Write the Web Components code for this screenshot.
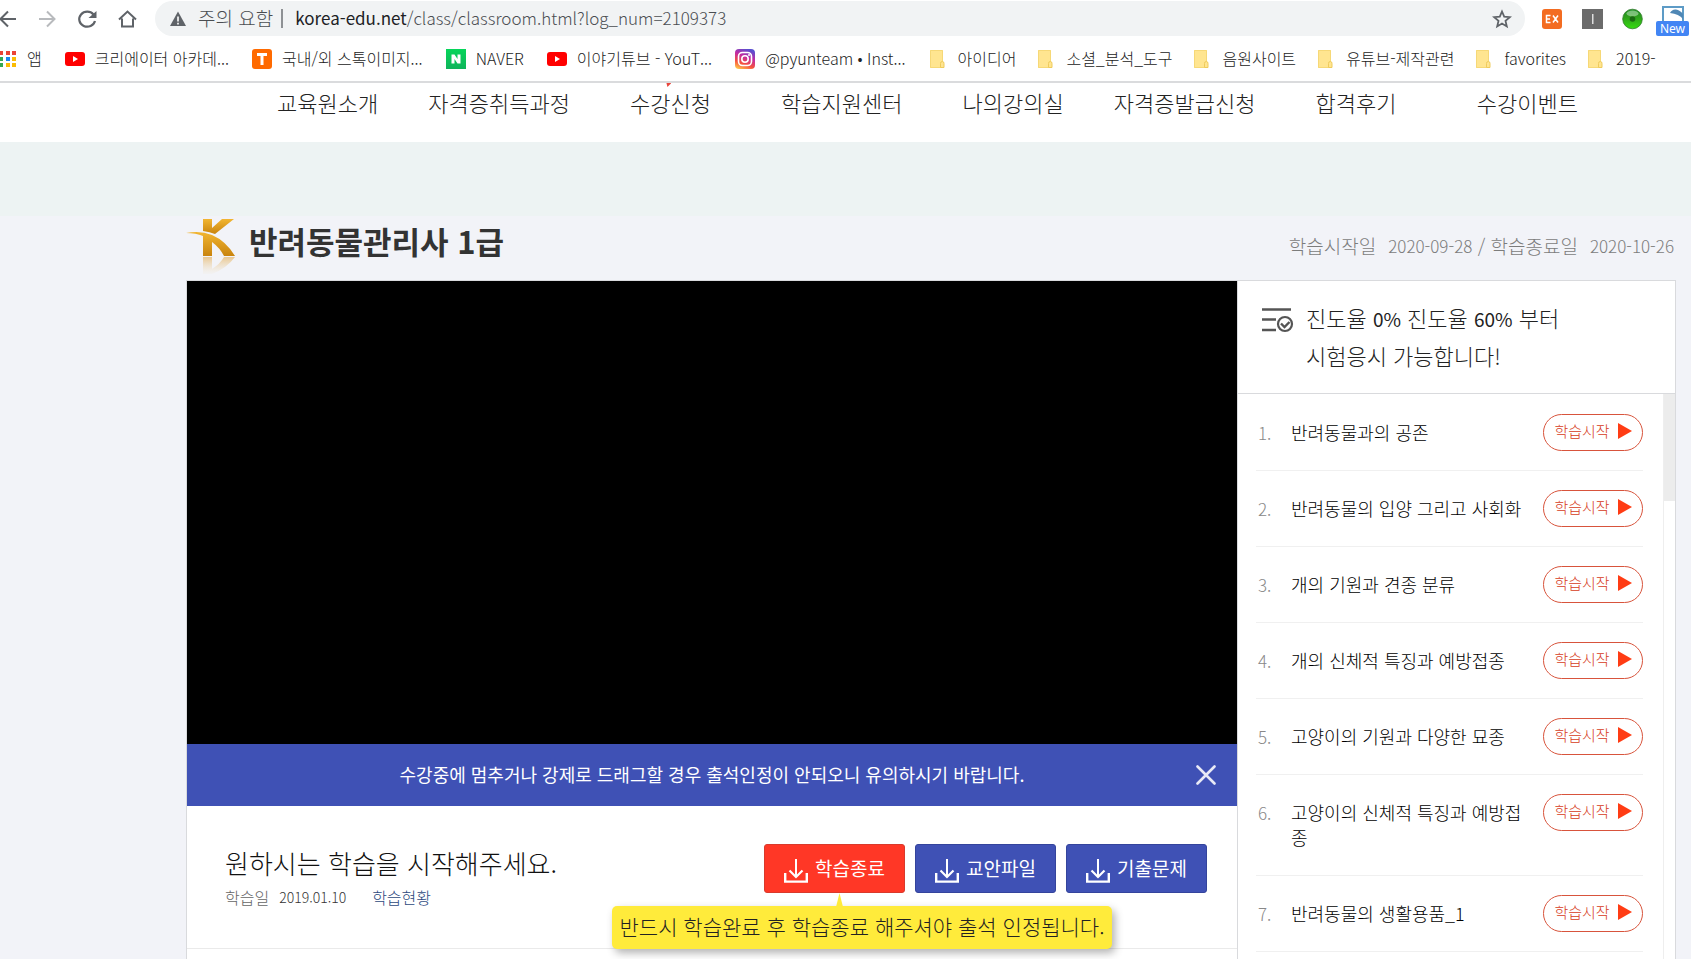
<!DOCTYPE html>
<html lang="ko">
<head>
<meta charset="utf-8">
<title>반려동물관리사 1급</title>
<style>
  html, body { height: 100%; }
  body { margin: 0; overflow: hidden; background: #f2f3f8; font-family: "Noto Sans CJK KR", sans-serif; color: #333; }
</style>
</head>
<body>
<class-app></class-app>
<script>
const define = (name, html, setup) => {
  const t = document.createElement('template');
  t.innerHTML = '<style>*{box-sizing:border-box}a{color:inherit;text-decoration:none}button{font:inherit;cursor:pointer}svg{display:block;flex:none}</style>' + html;
  customElements.define(name, class extends HTMLElement {
    constructor() {
      super();
      this.attachShadow({ mode: 'open' }).append(t.content.cloneNode(true));
    }
    connectedCallback() { if (setup) setup(this, this.shadowRoot); }
  });
};

const ICONS = {
  apps: '<svg width="17" height="18" viewBox="0 0 17 18"><path fill="#ea4335" d="M0 1h3v4H0zM6 1h4v4H6zM12 1h4v4h-4z"/><path fill="#34a853" d="M0 7h3v4H0zM0 13h3v4H0z"/><path fill="#1a86f0" d="M6 7h4v4H6z"/><path fill="#fbbc04" d="M12 7h4v4h-4zM6 13h4v4H6zM12 13h4v4h-4z"/></svg>',
  youtube: '<svg width="20" height="20" viewBox="0 0 20 20"><rect y="3" width="20" height="14" rx="3" fill="#f00"/><path d="M8 7l5 3-5 3z" fill="#fff"/></svg>',
  tstock: '<svg width="20" height="20" viewBox="0 0 20 20"><rect width="20" height="20" rx="3" fill="#ff6a00"/><path d="M5 4h10v3h-3.500v9h-3V7H5z" fill="#fff"/></svg>',
  naver: '<svg width="20" height="20" viewBox="0 0 20 20"><defs><linearGradient id="g" x2="0" y2="1"><stop stop-color="#06d65a"/><stop offset="1" stop-color="#0fb35a"/></linearGradient></defs><rect width="20" height="20" fill="url(#g)"/><path d="M5.500 5.500h3l3 4.500V5.500h3v9h-3l-3-4.500v4.500h-3z" fill="#fff"/></svg>',
  insta: '<svg width="20" height="20" viewBox="0 0 20 20"><defs><linearGradient id="g" x1=".2" y1="1" x2=".6" y2="0"><stop stop-color="#ffc34a"/><stop offset=".3" stop-color="#f5513f"/><stop offset=".65" stop-color="#c32aa3"/><stop offset="1" stop-color="#5a4fcf"/></linearGradient></defs><rect width="20" height="20" rx="4" fill="url(#g)"/><g fill="none" stroke="#fff" stroke-width="1.600"><rect x="3.500" y="3.500" width="13" height="13" rx="4"/><circle cx="10" cy="10" r="3.200"/></g><circle cx="14" cy="6" r="1" fill="#fff"/></svg>',
  folder: '<svg width="16" height="20" viewBox="0 0 16 20"><path d="M1 1h13v12.500h1V19H1z" fill="#ffe590"/><path d="M1.500 1.500h12v12M1.500 1.500v17h10" fill="none" stroke="#f6d877"/><path d="M11.500 18.500v-4q0-2 1.800-2T15 14.500v4z" fill="#ffe590" stroke="#efcb5c"/></svg>'
};

define('bookmark-item', `
<style>
  :host { display: block; flex: none; margin-right: 2px; }
  a { display: flex; align-items: center; gap: var(--gap, 10px); font: 300 16px/24px "Noto Sans CJK KR", sans-serif; color: #222; white-space: nowrap; }
  .text { padding-bottom: 2px; }
  :host([icon=folder]) { --gap: 13px; margin-right: 0; }
</style>
<a href="#"><span id="i"></span><span class="text"><slot></slot></span></a>`,
(el, r) => { r.getElementById('i').innerHTML = ICONS[el.getAttribute('icon')]; });

define('browser-bar', `
<style>
  :host { display: block; background: #fff; border-bottom: 2px solid #dadbdd; }
  .tools { display: flex; align-items: center; height: 37px; }
  .tools button { border: 0; background: none; padding: 0; width: 24px; height: 24px; display: grid; place-items: center; flex: none; }
  .nav { display: flex; gap: 16px; width: 155px; margin-left: -5px; flex: none; }
  .omni { flex: 1; display: flex; align-items: center; height: 35px; border-radius: 18px; background: #f1f3f4; padding: 0 11px 0 15px; margin-left: 5px; font: 300 17px/24px "Noto Sans CJK KR", sans-serif; color: #4a4d51; white-space: nowrap; }
  .omni span { padding-bottom: 2px; }
  .warn { font-size: 19px; margin: 0 8px 0 12px; }
  .sep { width: 2px; height: 19px; background: #8e9194; margin-right: 12px; }
  .url { flex: 1; min-width: 0; }
  .url b { font-weight: 400; color: #202124; }
  .ext { display: flex; align-items: center; gap: 16px; margin-left: 15px; }
  .clip { position: relative; width: 33px; height: 30px; margin: 0 2px 0 -4px; }
  .clip svg { margin: 2px 0 0 6px; }
  .badge { position: absolute; left: 0; right: 0; bottom: -2px; height: 15px; border-radius: 2px; background: #4285f4; color: #fff; font: 400 12px/15px "Noto Sans", sans-serif; text-align: center; }
  .marks { display: flex; align-items: center; gap: 21px; height: 44px; padding-bottom: 1px; overflow: hidden; }
</style>
<div class="tools">
  <div class="nav">
    <button aria-label="뒤로"><svg width="24" height="24" viewBox="0 0 24 24" fill="none" stroke="#5f6368" stroke-width="2"><path d="M21 12H6M13 4.500L5.500 12l7.500 7.500"/></svg></button>
    <button aria-label="앞으로"><svg width="24" height="24" viewBox="0 0 24 24" fill="none" stroke="#b8babd" stroke-width="2"><path d="M4 12h15M12 4.500l7.500 7.500-7.500 7.500"/></svg></button>
    <button aria-label="새로고침"><svg width="24" height="24" viewBox="0 0 24 24"><path d="M18.500 7.500A8 7.500 0 1 0 20 14" fill="none" stroke="#5f6368" stroke-width="2.200"/><path d="M21.500 4v7h-8z" fill="#5f6368"/></svg></button>
    <button aria-label="홈"><svg width="24" height="24" viewBox="0 0 24 24" fill="none" stroke="#5f6368" stroke-width="2"><path d="M7 11.500v8h11v-8M4 12.500L12.500 4.500l8.500 8"/></svg></button>
  </div>
  <div class="omni">
    <svg width="16" height="16" viewBox="0 0 16 16"><path d="M8 0.500L16 15H0z" fill="#5f6368"/><path d="M7.200 5.500h1.600v5H7.200zM7.200 11.800h1.600v1.600H7.200z" fill="#fff"/></svg>
    <span class="warn">주의 요함</span><i class="sep"></i>
    <span class="url"><b>korea-edu.net</b>/class/classroom.html?log_num=2109373</span>
    <button aria-label="북마크"><svg width="20" height="20" viewBox="0 0 20 20"><path d="M10 2.500l2.200 5.200 5.600.5-4.300 3.700 1.300 5.500L10 14.500l-4.800 2.900 1.300-5.500-4.300-3.700 5.600-.5z" fill="none" stroke="#5f6368" stroke-width="1.800"/></svg></button>
  </div>
  <div class="ext">
    <svg width="24" height="22" viewBox="0 0 24 22"><rect x="2" y="1" width="20" height="20" rx="3" fill="#f36c21"/><path d="M10.500 7.500H6.500v7h4M6.500 11h3.500M13 7.500l5 7M18 7.500l-5 7" fill="none" stroke="#fff" stroke-width="1.500"/></svg>
    <svg width="24" height="22" viewBox="0 0 24 22"><rect x="2" y="1" width="21" height="20" fill="#6b6b6b"/><path d="M12 6h1.500v10H12z" fill="#ddd"/></svg>
    <svg width="24" height="22" viewBox="0 0 24 22"><defs><linearGradient id="gg" x2="0" y2="1"><stop stop-color="#1c8f22"/><stop offset=".4" stop-color="#2fa01c"/><stop offset="1" stop-color="#35dc10"/></linearGradient></defs><circle cx="12.500" cy="11" r="9.800" fill="url(#gg)" stroke="#2e7a2a" stroke-width=".8"/><ellipse cx="12.500" cy="5.500" rx="6" ry="3" fill="#fff" opacity=".4"/><circle cx="12.500" cy="11" r="2.800" fill="#1a6a12"/></svg>
    <div class="clip"><svg width="22" height="16" viewBox="0 0 22 16"><rect x="1" y="1" width="20" height="15" fill="#fff" stroke="#5d9bc6" stroke-width="2"/><path d="M8 7q2-4 6-3.500T21 8v5q-4-5-13-6z" fill="#4f87b5"/></svg><span class="badge">New</span></div>
  </div>
</div>
<nav class="marks" aria-label="북마크바">
  <bookmark-item icon="apps">앱</bookmark-item>
  <bookmark-item icon="youtube">크리에이터 아카데...</bookmark-item>
  <bookmark-item icon="tstock">국내/외 스톡이미지...</bookmark-item>
  <bookmark-item icon="naver">NAVER</bookmark-item>
  <bookmark-item icon="youtube">이야기튜브 - YouT...</bookmark-item>
  <bookmark-item icon="insta">@pyunteam • Inst...</bookmark-item>
  <bookmark-item icon="folder">아이디어</bookmark-item>
  <bookmark-item icon="folder">소셜_분석_도구</bookmark-item>
  <bookmark-item icon="folder">음원사이트</bookmark-item>
  <bookmark-item icon="folder">유튜브-제작관련</bookmark-item>
  <bookmark-item icon="folder">favorites</bookmark-item>
  <bookmark-item icon="folder">2019-</bookmark-item>
</nav>`);

define('site-nav', `
<style>
  :host { display: block; background: #fff; }
  nav { display: grid; grid-template-columns: repeat(8, 1fr); padding: 7px 78px 28px 242px; font: 300 22px/24px "Noto Sans CJK KR", sans-serif; color: #222; text-align: center; white-space: nowrap; }
  .on { position: relative; }
  .on::before { content: ""; position: absolute; left: 50%; top: -7px; margin-left: -4px; width: 5px; height: 4px; background: #e8453c; clip-path: polygon(0 0, 100% 0, 20% 100%); }
</style>
<nav><a href="#">교육원소개</a><a href="#">자격증취득과정</a><a href="#" class="on">수강신청</a><a href="#">학습지원센터</a><a href="#">나의강의실</a><a href="#">자격증발급신청</a><a href="#">합격후기</a><a href="#">수강이벤트</a></nav>`);

define('course-header', `
<style>
  :host { display: flex; align-items: flex-start; height: 64px; }
  svg { margin-top: 1px; }
  h1 { margin: 5px 0 0 13px; font: 700 31px/40px "Noto Sans CJK KR", sans-serif; color: #333; }
  p { margin: 18px 2px 0 auto; display: flex; font: 300 19px/24px "Noto Sans CJK KR", sans-serif; color: #7c7c7c; white-space: pre; }
  time { font-size: 17px; }
  .gap { margin-left: 12px; }
</style>
<svg width="50" height="58" viewBox="0 0 50 58">
  <defs><linearGradient id="k" x2="0" y2="1"><stop stop-color="#f2b632"/><stop offset="1" stop-color="#c9840e"/></linearGradient>
  <linearGradient id="f" x2="0" y2="1"><stop stop-color="#e3a94a" stop-opacity=".6"/><stop offset="1" stop-color="#f2e3c4" stop-opacity=".1"/></linearGradient></defs>
  <path d="M17 2h9v9L36 2h12L29 17q-5-2-12-3z" fill="url(#k)"/>
  <path d="M0 16q14-3 26 2 14 6 23 21H38Q34 31 26 25v14h-9V19Q10 16 0 16z" fill="url(#k)"/>
  <path d="M17 40h9v12q8-5 12-12h11Q41 51 26 57h-9z" fill="url(#f)"/>
</svg>
<h1>반려동물관리사 1급</h1>
<p><span>학습시작일</span><time class="gap">2020-09-28</time><span> / 학습종료일</span><time class="gap">2020-10-26</time></p>`);

define('notice-bar', `
<style>
  :host { display: flex; align-items: center; height: 62px; background: #3f51b5; color: #fff; padding: 0 21px; }
  p { flex: 1; margin: 0 0 0 20px; padding-bottom: 2px; text-align: center; font: 400 18px/26px "Noto Sans CJK KR", sans-serif; }
  button { border: 0; background: none; padding: 0; }
</style>
<p><slot></slot></p>
<button aria-label="닫기"><svg width="20" height="20" viewBox="0 0 20 20" stroke="#e8eaf6" stroke-width="2.600" stroke-linecap="round"><path d="M1.500 1.500l17 17M18.500 1.500l-17 17"/></svg></button>`);

define('action-button', `
<style>
  :host { display: block; position: relative; }
  button { display: flex; align-items: center; justify-content: center; gap: 7px; width: 141px; height: 49px; padding: 0; border: 1px solid #34449c; border-radius: 3px; background: #3f51b5; color: #fff; font: 400 19px/24px "Noto Sans CJK KR", sans-serif; white-space: nowrap; }
  :host([primary]) button { background: #ff3726; border-color: #d93a2c; }
  svg { margin-top: 4px; }
  span { padding-bottom: 2px; }
</style>
<button><svg width="24" height="24" viewBox="0 0 24 24" fill="none" stroke="#fff"><path d="M12 0v17" stroke-width="2"/><path d="M5.500 11.500L12 18l6.500-6.500" stroke-width="2.200"/><path d="M1.200 14v8.600h21.600V14" stroke-width="2.400"/></svg><span><slot></slot></span></button>
<slot name="tip"></slot>`);

define('tool-tip', `
<style>
  :host { position: absolute; top: 62px; right: -207px; width: 500px; height: 43px; border-radius: 5px; background: #ffeb3b; box-shadow: 3px 4px 8px rgba(0,0,0,.3); color: #222; font: 300 21px/40px "Noto Sans CJK KR", sans-serif; text-align: center; white-space: nowrap; z-index: 2; }
  :host::before { content: ""; position: absolute; left: 224px; top: -13px; width: 7px; height: 14px; background: #ffeb3b; clip-path: polygon(50% 0, 100% 100%, 0 100%); }
</style>
<slot></slot>`);

define('lesson-player', `
<style>
  :host { display: block; flex: 1; min-width: 0; background: #fff; }
  .video { aspect-ratio: 1050 / 463; background: #000; }
  .info { display: flex; align-items: flex-start; height: 143px; padding: 38px 30px 0 38px; border-bottom: 1px solid #eaeaea; }
  h2 { margin: 1px 0 4px; font: 300 26px/36px "Noto Sans CJK KR", sans-serif; color: #111; }
  .meta { display: flex; align-items: center; font: 300 16px/24px "Noto Sans CJK KR", sans-serif; color: #666; }
  .meta time { font-size: 14px; margin: 0 26px 0 10px; color: #333; }
  .meta a { color: #2d4a80; }
  .acts { display: flex; gap: 10px; margin-left: auto; }
</style>
<div class="video"></div>
<notice-bar>수강중에 멈추거나 강제로 드래그할 경우 출석인정이 안되오니 유의하시기 바랍니다.</notice-bar>
<div class="info">
  <div><h2>원하시는 학습을 시작해주세요.</h2>
  <div class="meta"><span>학습일</span><time>2019.01.10</time><a href="#">학습현황</a></div></div>
  <div class="acts">
    <action-button primary>학습종료<tool-tip slot="tip">반드시 학습완료 후 학습종료 해주셔야 출석 인정됩니다.</tool-tip></action-button>
    <action-button>교안파일</action-button>
    <action-button>기출문제</action-button>
  </div>
</div>`);

define('lesson-row', `
<style>
  :host { display: grid; grid-template-columns: 35px 1fr 100px; align-items: start; border-bottom: 1px solid #f0f0f0; font: 300 18px/25px "Noto Sans CJK KR", sans-serif; color: #000; }
  .n { padding: 25px 0 0 2px; font-size: 17px; color: #888; }
  .t { padding: 25px 14px 25px 0; word-break: break-all; }
  button { margin-top: 19px; width: 100px; height: 37px; padding: 0 0 3px; display: flex; align-items: center; justify-content: center; gap: 8px; background: #fff; border: 1px solid #d8543c; border-radius: 19px; color: #d63c22; font: 300 15px/22px "Noto Sans CJK KR", sans-serif; white-space: nowrap; }
</style>
<span class="n"></span><span class="t"><slot></slot></span>
<button>학습시작<svg width="14" height="16" viewBox="0 0 14 16"><path d="M0 0l14 8L0 16z" fill="#ff3c14"/></svg></button>`,
(el, r) => { r.querySelector('.n').textContent = el.getAttribute('no') + '.'; });

define('lesson-list', `
<style>
  :host { display: flex; flex-direction: column; width: 438px; flex: none; background: #fff; border-left: 1px solid #d9dadd; }
  header { display: flex; align-items: flex-start; height: 113px; padding: 18px 24px 0; gap: 12px; border-bottom: 1px solid #d9dadd; font: 300 22px/36px "Noto Sans CJK KR", sans-serif; color: #222; }
  header svg { margin-top: 9px; }
  header p { margin: 0; }
  b { font-weight: 400; font-size: 19px; }
  .body { display: flex; flex: 1; }
  .rows { flex: 1; padding: 1px 20px 0 18px; }
  .bar { width: 12px; border-left: 1px solid #eee; }
  .thumb { height: 107px; background: #ececec; }
</style>
<header>
  <svg width="32" height="25" viewBox="0 0 32 25" fill="none" stroke="#555"><path d="M0 1.500h29M0 11.500h14M0 22h14" stroke-width="2.600"/><circle cx="23" cy="16" r="7" stroke-width="2.200"/><path d="M19 15.500l3.500 3.500 5-5" stroke-width="2.400"/></svg>
  <p>진도율 <b>0%</b> 진도율 <b>60%</b> 부터<br>시험응시 가능합니다!</p>
</header>
<div class="body">
  <div class="rows">
    <lesson-row no="1">반려동물과의 공존</lesson-row>
    <lesson-row no="2">반려동물의 입양 그리고 사회화</lesson-row>
    <lesson-row no="3">개의 기원과 견종 분류</lesson-row>
    <lesson-row no="4">개의 신체적 특징과 예방접종</lesson-row>
    <lesson-row no="5">고양이의 기원과 다양한 묘종</lesson-row>
    <lesson-row no="6">고양이의 신체적 특징과 예방접종</lesson-row>
    <lesson-row no="7">반려동물의 생활용품_1</lesson-row>
  </div>
  <div class="bar"><div class="thumb"></div></div>
</div>`);

define('class-app', `
<style>
  :host { display: flex; flex-direction: column; height: 100vh; overflow: hidden; }
  browser-bar, site-nav, .band, course-header { flex: none; }
  .band { height: 74px; background: #edf3f3; }
  main { flex: 1; min-height: 0; padding: 0 15px 0 186px; display: flex; flex-direction: column; }
  .card { flex: 1 0 auto; display: flex; border: 1px solid #d9dadd; border-bottom: 0; }
</style>
<browser-bar></browser-bar>
<site-nav></site-nav>
<div class="band"></div>
<main>
  <course-header></course-header>
  <div class="card"><lesson-player></lesson-player><lesson-list></lesson-list></div>
</main>`);
</script>
</body>
</html>
